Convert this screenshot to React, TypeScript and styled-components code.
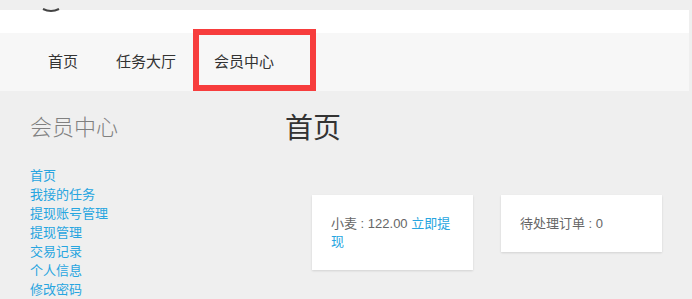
import styled, { createGlobalStyle } from 'styled-components';

const GlobalStyle = createGlobalStyle`
  html, body {
    margin: 0;
    padding: 0;
    background-color: #efefef;
    font-family: "Liberation Sans", "Noto Sans CJK SC", sans-serif;
  }
`;

const Page = styled.div`
  width: 689px;
  padding-top: 10px;
`;

const TopBar = styled.div`
  height: 23px;
  background-color: #fff;
  display: flex;
  align-items: flex-start;
  padding-left: 42px;
`;

const Logo = styled.svg`
  display: block;
  margin-top: -2px;
`;

const NavBar = styled.nav`
  height: 58px;
  background-color: #f7f7f7;
  display: flex;
  align-items: center;
  padding-left: 29px;
`;

const NavItem = styled.div`
  position: relative;
  font-size: 15px;
  color: #333;
  padding: 0 19px;
  line-height: 20px;
`;

const Highlight = styled.div`
  position: absolute;
  left: -2px;
  top: -23px;
  width: 111px;
  height: 50px;
  border: 6px solid #f73d3d;
`;

const Body = styled.div`
  display: grid;
  grid-template-columns: 255px 1fr;
  padding-left: 30px;
`;

const Sidebar = styled.aside`
  display: flex;
  flex-direction: column;
`;

const SideTitle = styled.h3`
  margin: 19px 0 0;
  font-size: 22px;
  font-weight: 300;
  line-height: 36px;
  color: #808080;
`;

const SideLinks = styled.ul`
  list-style: none;
  margin: 20px 0 0;
  padding: 0;
`;

const SideLink = styled.li`
  font-size: 13px;
  line-height: 19px;
  color: #27a5e0;
`;

const Main = styled.main`
  display: flex;
  flex-direction: column;
`;

const MainTitle = styled.h1`
  margin: 16px 0 0;
  font-size: 28px;
  font-weight: 400;
  line-height: 44px;
  color: #333;
`;

const Cards = styled.div`
  display: flex;
  align-items: flex-start;
  gap: 28px;
  margin: 44px 0 0 27px;
`;

const Card = styled.div`
  width: 161px;
  box-sizing: border-box;
  padding: 20px 19px 19px;
  background-color: #fff;
  box-shadow: 0 1px 2px rgba(0, 0, 0, 0.12);
  font-size: 13px;
  line-height: 18px;
  color: #666;
`;

const Link = styled.span`
  color: #27a5e0;
`;

const links = ['首页', '我接的任务', '提现账号管理', '提现管理', '交易记录', '个人信息', '修改密码'];

const App = () => {
  return (
    <>
      <GlobalStyle />
      <Page>
        <TopBar>
          <Logo width="18" height="5" viewBox="0 0 18 5">
            <path d="M1 1 Q9 5 17 1" stroke="#444" strokeWidth="2" fill="none" />
          </Logo>
        </TopBar>
        <NavBar>
          <NavItem>首页</NavItem>
          <NavItem>任务大厅</NavItem>
          <NavItem>
            会员中心
            <Highlight />
          </NavItem>
        </NavBar>
        <Body>
          <Sidebar>
            <SideTitle>会员中心</SideTitle>
            <SideLinks>
              {links.map((l) => (
                <SideLink key={l}>{l}</SideLink>
              ))}
            </SideLinks>
          </Sidebar>
          <Main>
            <MainTitle>首页</MainTitle>
            <Cards>
              <Card>
                小麦 : 122.00 <Link>立即提现</Link>
              </Card>
              <Card>待处理订单 : 0</Card>
            </Cards>
          </Main>
        </Body>
      </Page>
    </>
  );
};

export default App;
